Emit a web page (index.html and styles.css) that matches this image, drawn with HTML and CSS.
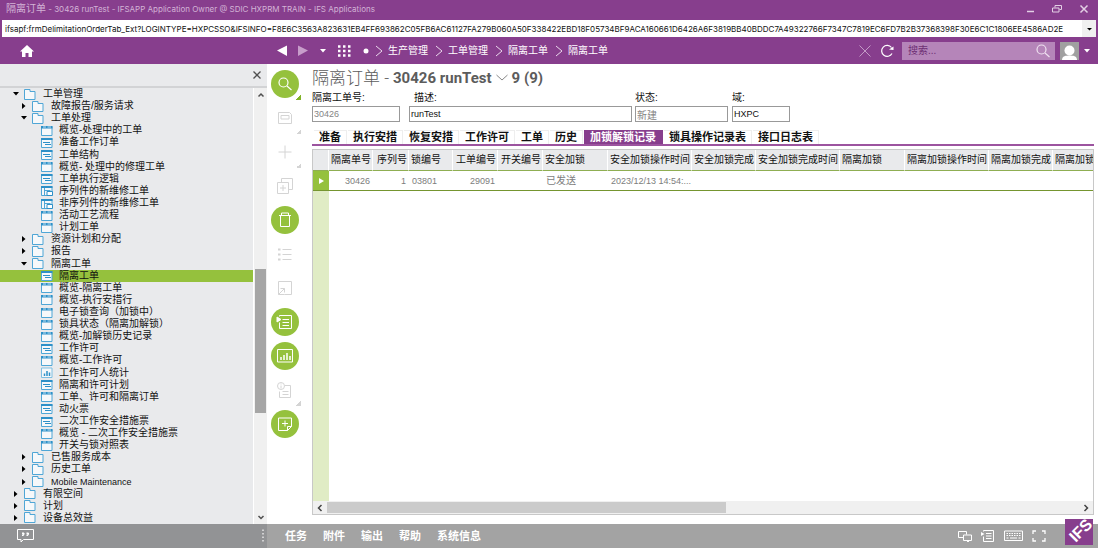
FILE: index.html
```html
<!DOCTYPE html>
<html lang="zh-CN">
<head>
<meta charset="utf-8">
<title>隔离订单 - 30426 runTest</title>
<link rel="stylesheet" href="styles.css">
</head>
<body>
<svg class="sprite" aria-hidden="true">
  <symbol id="folder" viewBox="0 0 12 11"><path d="M.5 .5h5.500v2h5v8h-10.500z" fill="#f6f8fa" stroke="#4fa6d6"/></symbol>
  <symbol id="win" viewBox="0 0 12 11"><path d="M.5 1.500h10.500v9h-10.500z" fill="#f6f8fa" stroke="#4fa6d6"/><path d="M0 1h11.500v2.500h-11.500z" fill="#2d90c8"/><path d="M2 2h3M6.500 2h3.500" stroke="#bfe0f2"/></symbol>
  <symbol id="form" viewBox="0 0 12 11"><path d="M.5 1.500h10.500v9h-10.500z" fill="#f6f8fa" stroke="#4fa6d6"/><path d="M0 1h11.500v2h-11.500z" fill="#2d90c8"/><path d="M2 5.500h7M4 7.500h6" stroke="#2d90c8"/></symbol>
  <symbol id="sub" viewBox="0 0 12 11"><path d="M.5 1.500h10.500v9h-10.500z" fill="#f6f8fa" stroke="#4fa6d6"/><path d="M0 1h11.500v2h-11.500z" fill="#2d90c8"/><path d="M3.500 3v7M3.500 5.500h6" stroke="#4fa6d6"/><path d="M6 6.500h5.500v4h-5.500z" fill="#fff" stroke="#2d90c8"/></symbol>
  <symbol id="stat" viewBox="0 0 12 11"><path d="M.5 1h10.500v9.500h-10.500z" fill="#f6f8fa" stroke="#7fbfe2"/><path d="M3.500 9v-2.500M6 9v-5M8.500 9v-3.500" stroke="#2d90c8" stroke-width="1.500"/></symbol>
  <symbol id="open" viewBox="0 0 8 8"><path d="M1 2h6l-3 3.500z"/></symbol>
  <symbol id="closed" viewBox="0 0 8 8"><path d="M2 1l3.500 3-3.500 3z"/></symbol>
  <symbol id="up" viewBox="0 0 8 8"><path d="M1.500 5.500L4 3l2.500 2.500" fill="none" stroke="#505050" stroke-width="1.500"/></symbol>
  <symbol id="down" viewBox="0 0 8 8"><path d="M1.500 3L4 5.500l2.500-2.500" fill="none" stroke="#505050" stroke-width="1.500"/></symbol>
  <symbol id="sep" viewBox="0 0 8 12"><path d="M1 1l6 5-6 5" fill="none" stroke="#ead8ec"/></symbol>
  <symbol id="search" viewBox="0 0 16 16"><circle cx="6.500" cy="6.500" r="4.500" fill="none" stroke="currentColor" stroke-width="1.200"/><path d="M10 10l4.500 4" stroke="currentColor" stroke-width="1.200"/></symbol>
</svg>

<header>
  <div class="titlebar">
    <span class="wtitle"><span class="cjk">隔离订单</span> - 30426 runTest - IFSAPP Application Owner @ SDIC HXPRM TRAIN - IFS Applications</span>
    <button class="bare" aria-label="Minimize"><svg width="10" height="10"><path d="M2 7.500h7" stroke="#e3cfe5" stroke-width="1.500"/></svg></button>
    <button class="bare" aria-label="Restore"><svg width="10" height="10" fill="none" stroke="#e3cfe5"><path d="M3 3.500v-2h6.500v4h-2M.5 4h6.500v4h-6.500z"/></svg></button>
    <button class="bare" aria-label="Close"><svg width="10" height="10"><path d="M1.500 1.500l7 7M8.500 1.500l-7 7" stroke="#e3cfe5" stroke-width="1.500"/></svg></button>
  </div>
  <div class="address">
    <input aria-label="Address" value="ifsapf:frmDelimitationOrderTab_Ext?LOGINTYPE=HXPCSSO&amp;IFSINFO=F8E6C3563A823631EB4FF693862C05FB6AC61127FA279B060A50F338422EBD18F05734BF9ACA160661D6426A6F3819BB40BDDC7A49322766F7347C7819EC6FD7B2B37368398F30E6C1C1806EE4586AD2E">
    <button class="bare drop" aria-label="History"><svg width="8" height="8"><path d="M2 3h5l-2.500 2.500z"/></svg></button>
  </div>
  <nav class="navbar">
    <div class="homebox"><a href="#" aria-label="Home"><svg width="14" height="12" fill="#fff"><path d="M7 0l7 6.500h-2v5.500h-3.500v-4h-3v4h-3.500v-5.500h-2z"/></svg></a></div>
    <div class="navtools">
      <button class="bare" aria-label="Back"><svg width="10" height="12"><path d="M10 .5v10.500l-10-5.500z" fill="#fff"/></svg></button>
      <button class="bare" aria-label="Forward"><svg width="10" height="12"><path d="M0 .5v10.500l10-5.500z" fill="#c79dca"/></svg></button>
      <button class="bare" aria-label="Recent"><svg width="8" height="6"><path d="M1 1h6l-3 3.500z" fill="#fff"/></svg></button>
      <button class="bare" aria-label="Navigator"><svg width="14" height="12" stroke="#fff" stroke-width="2.500" stroke-dasharray="2.500 2.500"><path d="M0 1.500h13M0 6h13M0 10.500h13"/></svg></button>
      <svg width="6" height="6"><circle cx="3" cy="3" r="2.500" fill="#fff"/></svg>
    </div>
    <div class="crumbs">
      <svg width="8" height="12"><use href="#sep"/></svg><a href="#">生产管理</a>
      <svg width="8" height="12"><use href="#sep"/></svg><a href="#">工单管理</a>
      <svg width="8" height="12"><use href="#sep"/></svg><a href="#">隔离工单</a>
      <svg width="8" height="12"><use href="#sep"/></svg><a href="#">隔离工单</a>
    </div>
    <button class="bare" aria-label="Stop"><svg width="12" height="12"><path d="M.5 .5l11 11M11.500 .5l-11 11" stroke="#c39ac6"/></svg></button>
    <button class="bare reload" aria-label="Refresh"><svg width="14" height="14"><path d="M12 9.500a5.500 5.500 0 1 1-.5-6" fill="none" stroke="#fff" stroke-width="1.200"/><path d="M9 5.500l4.500-3v3.500z" fill="#fff"/></svg></button>
    <div class="searchbox"><input aria-label="搜索" placeholder="搜索..."><button class="bare" aria-label="Search"><svg width="16" height="16"><use href="#search"/></svg></button></div>
    <button class="bare user" aria-label="User"><svg width="19" height="18"><path d="M0 0h19v18h-19z" fill="#a0a0a0"/><path d="M2 18c0-4 4-4.500 7.500-4.500s7.500.5 7.500 4.500z" fill="#fff"/><circle cx="9.500" cy="8.500" r="5" fill="#fff"/></svg><svg width="8" height="6"><path d="M1 1h6l-3 3.500z" fill="#fff"/></svg></button>
  </nav>
</header>

<main>
  <aside>
    <div class="sidehead"><button class="bare" aria-label="Close panel"><svg width="10" height="10"><path d="M1.500 1.500l7 7M8.500 1.500l-7 7" stroke="#505050" stroke-width="1.300"/></svg></button></div>
    <div class="sidebody">
      <ul class="tree">
        <li class="l1"><svg class="tw"><use href="#open"/></svg><svg class="ic"><use href="#folder"/></svg><a href="#">工单管理</a></li>
        <li class="l2"><svg class="tw"><use href="#closed"/></svg><svg class="ic"><use href="#folder"/></svg><a href="#">故障报告/服务请求</a></li>
        <li class="l2"><svg class="tw"><use href="#open"/></svg><svg class="ic"><use href="#folder"/></svg><a href="#">工单处理</a></li>
        <li class="l3"><svg class="ic"><use href="#win"/></svg><a href="#">概览-处理中的工单</a></li>
        <li class="l3"><svg class="ic"><use href="#form"/></svg><a href="#">准备工作订单</a></li>
        <li class="l3"><svg class="ic"><use href="#form"/></svg><a href="#">工单结构</a></li>
        <li class="l3"><svg class="ic"><use href="#win"/></svg><a href="#">概览- 处理中的修理工单</a></li>
        <li class="l3"><svg class="ic"><use href="#form"/></svg><a href="#">工单执行逻辑</a></li>
        <li class="l3"><svg class="ic"><use href="#sub"/></svg><a href="#">序列件的新维修工单</a></li>
        <li class="l3"><svg class="ic"><use href="#sub"/></svg><a href="#">非序列件的新维修工单</a></li>
        <li class="l3"><svg class="ic"><use href="#win"/></svg><a href="#">活动工艺流程</a></li>
        <li class="l3"><svg class="ic"><use href="#win"/></svg><a href="#">计划工单</a></li>
        <li class="l2"><svg class="tw"><use href="#closed"/></svg><svg class="ic"><use href="#folder"/></svg><a href="#">资源计划和分配</a></li>
        <li class="l2"><svg class="tw"><use href="#closed"/></svg><svg class="ic"><use href="#folder"/></svg><a href="#">报告</a></li>
        <li class="l2"><svg class="tw"><use href="#open"/></svg><svg class="ic"><use href="#folder"/></svg><a href="#">隔离工单</a></li>
        <li class="l3 sel"><svg class="ic"><use href="#form"/></svg><a href="#">隔离工单</a></li>
        <li class="l3"><svg class="ic"><use href="#win"/></svg><a href="#">概览-隔离工单</a></li>
        <li class="l3"><svg class="ic"><use href="#win"/></svg><a href="#">概览-执行安措行</a></li>
        <li class="l3"><svg class="ic"><use href="#win"/></svg><a href="#">电子锁查询（加锁中）</a></li>
        <li class="l3"><svg class="ic"><use href="#win"/></svg><a href="#">锁具状态（隔离加解锁）</a></li>
        <li class="l3"><svg class="ic"><use href="#win"/></svg><a href="#">概览-加解锁历史记录</a></li>
        <li class="l3"><svg class="ic"><use href="#form"/></svg><a href="#">工作许可</a></li>
        <li class="l3"><svg class="ic"><use href="#win"/></svg><a href="#">概览-工作许可</a></li>
        <li class="l3"><svg class="ic"><use href="#stat"/></svg><a href="#">工作许可人统计</a></li>
        <li class="l3"><svg class="ic"><use href="#form"/></svg><a href="#">隔离和许可计划</a></li>
        <li class="l3"><svg class="ic"><use href="#win"/></svg><a href="#">工单、许可和隔离订单</a></li>
        <li class="l3"><svg class="ic"><use href="#form"/></svg><a href="#">动火票</a></li>
        <li class="l3"><svg class="ic"><use href="#form"/></svg><a href="#">二次工作安全措施票</a></li>
        <li class="l3"><svg class="ic"><use href="#win"/></svg><a href="#">概览 - 二次工作安全措施票</a></li>
        <li class="l3"><svg class="ic"><use href="#win"/></svg><a href="#">开关与锁对照表</a></li>
        <li class="l2"><svg class="tw"><use href="#closed"/></svg><svg class="ic"><use href="#folder"/></svg><a href="#">已售服务成本</a></li>
        <li class="l2"><svg class="tw"><use href="#closed"/></svg><svg class="ic"><use href="#folder"/></svg><a href="#">历史工单</a></li>
        <li class="l2"><svg class="tw"><use href="#closed"/></svg><svg class="ic"><use href="#folder"/></svg><a href="#" class="latin">Mobile Maintenance</a></li>
        <li class="l1"><svg class="tw"><use href="#closed"/></svg><svg class="ic"><use href="#folder"/></svg><a href="#">有限空间</a></li>
        <li class="l1"><svg class="tw"><use href="#closed"/></svg><svg class="ic"><use href="#folder"/></svg><a href="#">计划</a></li>
        <li class="l1"><svg class="tw"><use href="#closed"/></svg><svg class="ic"><use href="#folder"/></svg><a href="#">设备总效益</a></li>
      </ul>
      <div class="vscroll"><svg width="8" height="8"><use href="#up"/></svg><div class="vtrack"><div class="vthumb"></div></div><svg width="8" height="8"><use href="#down"/></svg></div>
    </div>
  </aside>

  <div class="tools">
    <button class="tool on more" aria-label="Search"><svg width="16" height="16"><use href="#search"/></svg></button>
    <button class="tool more" aria-label="Save"><svg width="16" height="16"><path d="M1.500 2.500h11l2 2v9h-13zM4 5.500h8v3.500h-8z"/></svg></button>
    <button class="tool more" aria-label="New"><svg width="16" height="16"><path d="M8 1.500v13M1.500 8h13"/></svg></button>
    <button class="tool" aria-label="Duplicate"><svg width="16" height="16"><path d="M.5 4.500h11v11h-11zM4.500 4v-3.500h11v11h-3.500M6 7v6M3 10h6"/></svg></button>
    <button class="tool on" aria-label="Delete"><svg width="16" height="16"><path d="M3.500 3.500h9v11h-9zM2 3.500h12M4.500 3v-2h7v2"/></svg></button>
    <button class="tool" aria-label="List"><svg width="16" height="16"><path d="M5.500 3.500h9M5.500 8.500h9M5.500 13.500h9"/><path d="M1 3.500h2.500M1 8.500h2.500M1 13.500h2.500" stroke-width="2"/></svg></button>
    <button class="tool" aria-label="Detach"><svg width="16" height="16"><path d="M1.500 8v-6.500h13v13h-7M1.500 14.500l6-6M3.500 8.500h4v4M1.500 8v6.500h6"/></svg></button>
    <button class="tool on" aria-label="Run list"><svg width="16" height="16"><path d="M2.500 2.500v-1h12v13h-12v-6M5.500 5.500h6.500M5.500 8.500h6.500M5.500 11.500h6.500"/><path d="M0 3l4 2.500-4 2.500z" fill="currentColor"/></svg></button>
    <button class="tool on" aria-label="Chart"><svg width="16" height="16"><path d="M.5 1.500h15v12.500h-15z"/><path d="M4 12v-3M7 12v-5M10 12v-7M13 12v-4" stroke-width="1.500"/></svg></button>
    <button class="tool more" aria-label="Info"><svg width="16" height="16"><path d="M8 3.500h5.500v12h-11v-6M5.500 9.500h6M5.500 12.500h6"/><circle cx="4" cy="4" r="3.500"/><path d="M4 3.500v3M4 1.500v1"/></svg></button>
    <button class="tool on" aria-label="Add note"><svg width="16" height="16"><path d="M10.500 14.500h-9v-12.500h13v8.500zM10.500 14.500v-4h4M8 4.500v6M5 7.500h6"/></svg></button>
  </div>

  <section class="work">
    <h1><span>隔离订单 -</span> 30426 runTest <svg width="12" height="8"><path d="M.5 1l5.500 5 5.500-5" fill="none" stroke="#888"/></svg> 9 (9)</h1>
    <form class="fields">
      <div class="f1"><label for="no">隔离工单号:</label><input id="no" class="dim" value="30426"></div>
      <div class="f2"><label for="desc">描述:</label><input id="desc" value="runTest"></div>
      <div class="f3"><label for="st">状态:</label><input id="st" class="dim" value="新建"></div>
      <div class="f4"><label for="dom">域:</label><input id="dom" value="HXPC"></div>
    </form>
    <div class="tabs" role="tablist">
      <button role="tab">准备</button><button role="tab">执行安措</button><button role="tab">恢复安措</button><button role="tab">工作许可</button><button role="tab">工单</button><button role="tab">历史</button><button role="tab" class="active" aria-selected="true">加锁解锁记录</button><button role="tab">锁具操作记录表</button><button role="tab">接口日志表</button>
    </div>
    <div class="grid">
      <div class="gridview">
        <table>
          <colgroup><col class="c16"><col class="c44"><col class="c36"><col class="c44"><col class="c45"><col class="c45"><col class="c65"><col class="c84"><col class="c64"><col class="c84"><col class="c65"><col class="c84"><col class="c64"><col class="c44"></colgroup>
          <thead><tr><th></th><th class="r">隔离单号</th><th class="r">序列号</th><th>锁编号</th><th class="r">工单编号</th><th class="r">开关编号</th><th>安全加锁</th><th>安全加锁操作时间</th><th>安全加锁完成</th><th>安全加锁完成时间</th><th>隔离加锁</th><th>隔离加锁操作时间</th><th>隔离加锁完成</th><th>隔离加锁</th></tr></thead>
          <tbody><tr><td class="mark"><svg width="6" height="6"><path d="M1 0l5 3-5 3z" fill="#fff"/></svg></td><td class="r">30426</td><td class="r">1</td><td>03801</td><td class="r">29091</td><td></td><td class="cj">已发送</td><td>2023/12/13 14:54:...</td><td></td><td></td><td></td><td></td><td></td><td></td></tr></tbody>
        </table>
        <div class="gutter"></div>
      </div>
      <div class="hscroll"><svg width="14" height="10"><path d="M8.500 2L5.500 5l3 3" fill="none" stroke="#444" stroke-width="1.500"/></svg><div class="htrack"><div class="hthumb"></div></div><svg width="14" height="10"><path d="M5.500 2L8.500 5l-3 3" fill="none" stroke="#444" stroke-width="1.500"/></svg></div>
    </div>
  </section>
</main>

<footer>
  <div class="footleft">
    <button class="bare" aria-label="Feedback"><svg width="17" height="14" fill="none" stroke="#fff"><path d="M.5 .5h16v10h-10l-2.500 2.500v-2.500h-3.500z"/><path d="M5 6.500c1.500 0 2-1 2-2.500M9.500 6.500c1.500 0 2-1 2-2.500" stroke-width="1.200"/><path d="M5 4.500h2M9.500 4.500h2" stroke-width="2"/></svg></button>
    <svg width="4" height="14"><path d="M2 .5v13" stroke="#e6e6e6" stroke-width="1.500" stroke-dasharray="1.500 2"/></svg>
  </div>
  <div class="footmain">
    <button class="bare">任务</button><button class="bare">附件</button><button class="bare">输出</button><button class="bare">帮助</button><button class="bare">系统信息</button>
    <div class="footicons">
      <button class="bare" aria-label="Windows"><svg width="14" height="12" fill="none" stroke="#fff"><path d="M5 7.500h-4.500v-6h8v3M5.500 5h8v5.500h-8zM9 11.500h2"/></svg></button>
      <button class="bare" aria-label="Panel"><svg width="14" height="12" fill="none" stroke="#fff"><path d="M2.500 1.500v-1h10v11h-10v-5M5 3.500h5.500M5 6h5.500M5 8.500h5.500"/><path d="M0 2l3.500 2-3.500 2z" fill="#fff" stroke="none"/></svg></button>
      <button class="bare" aria-label="Keyboard"><svg width="19" height="12" fill="none" stroke="#fff"><path d="M.5 1h18v9.500h-18z"/><path d="M2.500 3.500h14M2.500 5.500h14" stroke-dasharray="1.500 1"/><path d="M2.500 8h2M6 8h7M14.500 8h2"/></svg></button>
      <button class="bare" aria-label="Full screen"><svg width="14" height="12" fill="none" stroke="#fff" stroke-width="1.300"><path d="M1 4v-3h3M10 1h3v3M13 8v3h-3M4 11h-3v-3"/></svg></button>
    </div>
    <svg class="logo" width="28" height="26"><path d="M0 0h28v26h-28z" fill="#873e8d"/><text x="-3" y="4" transform="translate(10 19) rotate(-45)">IFS</text></svg>
  </div>
</footer>
</body>
</html>
```

FILE: styles.css
```css
* { box-sizing: border-box; }
body { margin: 0; height: 100vh; padding: 0 3px 1px 0; display: flex; flex-direction: column; background: #fff; color: #111; font: 10px/12px "Liberation Sans", "Noto Sans CJK SC", sans-serif; }
svg { display: block; flex: none; overflow: visible; }
.sprite { position: absolute; width: 0; height: 0; }
a { color: inherit; text-decoration: none; }
button, input { font: inherit; color: inherit; margin: 0; }
.bare { background: none; border: 0; padding: 0; }
header { background: #873e8d; color: #fff; }
.titlebar { display: flex; align-items: center; gap: 17px; height: 20px; padding: 0 9px 3px 6px; font-family: Inter, "Noto Sans CJK SC", sans-serif; font-size: 8px; color: #d3b3d6; }
.wtitle { flex: 1; white-space: nowrap; }
.cjk { font-size: 10px; }
.address { display: flex; height: 17px; margin: 0 2px; background: #fff; }
.address input { flex: 1; min-width: 0; border: 0; padding: 0 0 0 3px; margin-right: 2px; background: #fff; color: #111; font-family: Inter, sans-serif; font-size: 8px; outline: 0; }
.drop { width: 14px; background: #f0f0f0; display: flex; align-items: center; justify-content: center; }
.navbar { display: flex; align-items: center; height: 27px; padding-right: 7px; }
.homebox { width: 267px; padding-left: 20px; }
.navtools { display: flex; align-items: center; gap: 11px; padding: 0 6px 0 10px; }
.crumbs { flex: 1; display: flex; align-items: center; gap: 5px; }
.crumbs a { margin-right: 2px; }
.reload { margin: 0 8px 0 9px; }
.searchbox { display: flex; align-items: center; width: 153px; height: 18px; padding: 0 4px; background: #b585b9; }
.searchbox input { flex: 1; min-width: 0; border: 0; padding: 0 2px; background: none; outline: 0; }
.searchbox input::placeholder { color: #6e2f74; opacity: 1; }
.searchbox button { color: #f0e2f1; }
.user { display: flex; align-items: center; gap: 4px; margin-left: 5px; }

main { flex: 1; min-height: 0; display: flex; }
aside { width: 267px; flex: none; display: flex; flex-direction: column; background: #e9eaec; }
.sidehead { display: flex; justify-content: flex-end; align-items: center; height: 24px; padding-right: 5px; border-bottom: 2px solid #d2d3d5; }
.sidebody { flex: 1; min-height: 0; display: flex; }
.tree { flex: 1; display: grid; grid-auto-rows: 1fr; margin: 0; padding: 0; list-style: none; }
.tree li { display: flex; align-items: center; min-height: 0; line-height: 12px; white-space: nowrap; }
.tree a { margin-left: 6px; }
.tree .latin { font-size: 9px; }
.tw { width: 8px; height: 8px; margin-right: 4px; }
.ic { width: 12px; height: 11px; }
.l1 { padding-left: 12px; }
.l2 { padding-left: 20px; }
.l3 { padding-left: 41px; }
.l1 .ic, .l2 .ic { margin-right: 1px; }
.sel { background: #95c13d; }
.vscroll { width: 14px; border-left: 1px solid #fff; display: flex; flex-direction: column; align-items: center; padding: 3px 1px; gap: 2px; background: #f0f0f0; }
.vtrack { flex: 1; width: 100%; display: grid; grid-template-rows: 41fr 35fr 24fr; }
.vthumb { grid-row: 2; background: #a6a6a6; }

.tools { width: 45px; flex: none; display: flex; flex-direction: column; gap: 6px; padding: 6px 0 0 4px; }
.tool { position: relative; width: 28px; height: 28px; padding: 0; border: 0; border-radius: 50%; background: none; color: #d4d4d4; display: flex; align-items: center; justify-content: center; }
.tool svg { fill: none; stroke: currentColor; }
.on { background: #95c13d; color: #fff; }
.more::after { content: ""; position: absolute; right: -2px; bottom: -2px; width: 5px; height: 5px; background: linear-gradient(135deg, transparent 50%, #d4d4d4 50%); }
.on.more::after { background: linear-gradient(135deg, transparent 50%, #82b32a 50%); }

.work { flex: 1; min-width: 0; display: flex; flex-direction: column; padding: 2px 4px 9px 0; }
h1 { display: flex; align-items: center; gap: 4px; height: 24px; margin: 0; font-family: Roboto, "Noto Sans CJK SC", sans-serif; font-size: 15px; line-height: 24px; color: #5c5c5c; white-space: nowrap; }
h1 span { font-size: 17px; font-weight: 300; }
.fields { display: flex; }
.fields div { display: flex; flex-direction: column; }
.fields label { height: 16px; line-height: 16px; }
.fields input { width: 100%; height: 16px; padding: 0 1px; border: 1px solid #999; background: #fff; font-size: 9px; outline: 0; }
.fields .dim { color: #858585; }
.f1 { width: 88px; margin-right: 9px; }
.f2 { width: 223px; margin-right: 3px; }
.f2 label { padding-left: 5px; }
.f3 { width: 93px; margin-right: 4px; }
.f4 { width: 58px; }
#st { font-size: 10px; }
.tabs { display: flex; gap: 1px; margin-top: 8px; padding-left: 2px; border-bottom: 2px solid #9c549f; }
.tabs button { height: 14px; padding: 0 5px; border: 1px solid #eee; border-width: 1px 1px 0 0; background: #fff; font-size: 11px; line-height: 13px; font-weight: bold; flex: none; }
.tabs .active { padding: 0 6px; background: #873e8d; border-color: #873e8d; color: #fff; }
.grid { flex: 1; min-height: 0; margin-top: 3px; display: flex; flex-direction: column; border: 1px solid #c8c8c8; }
.gridview { flex: 1; min-height: 0; display: flex; flex-direction: column; overflow: hidden; }
table { width: 784px; table-layout: fixed; border-collapse: separate; border-spacing: 0; }
th, td { padding: 0 3px; overflow: hidden; white-space: nowrap; text-align: left; font-weight: normal; }
th { height: 21px; padding: 0 1px 0 2px; background: #e9eaec; border-right: 1px solid #fff; border-bottom: 1px solid #8fae52; }
td { height: 20px; border-bottom: 1px solid #75952f; color: #7d7d7d; font-size: 9px; }
td.cj { font-size: 10px; }
.r { text-align: right; }
.mark { padding: 0 5px; background: #95c13d; }
.c16 { width: 16px; } .c36 { width: 36px; } .c44 { width: 44px; } .c45 { width: 45px; }
.c64 { width: 64px; } .c65 { width: 65px; } .c84 { width: 84px; }
.gutter { flex: 1; width: 16px; background: #e0ecc5; }
.hscroll { display: flex; align-items: center; height: 13px; background: #f0f0f0; }
.htrack { flex: 1; }
.hthumb { width: 53%; height: 11px; background: #cbcbcb; }

footer { display: flex; height: 24px; color: #fff; }
.footleft { width: 267px; flex: none; display: flex; align-items: center; justify-content: space-between; padding: 0 2px 0 17px; background: #929395; }
.footmain { position: relative; flex: 1; display: flex; align-items: center; gap: 16px; padding: 0 52px 0 18px; background: #a3a3a3; font-size: 11px; font-weight: bold; }
.footicons { display: flex; gap: 9px; margin-left: auto; }
.logo { position: absolute; right: 5px; bottom: 3px; overflow: hidden; }
.logo text { font: bold 16px "Liberation Sans", sans-serif; fill: #fff; }
```
